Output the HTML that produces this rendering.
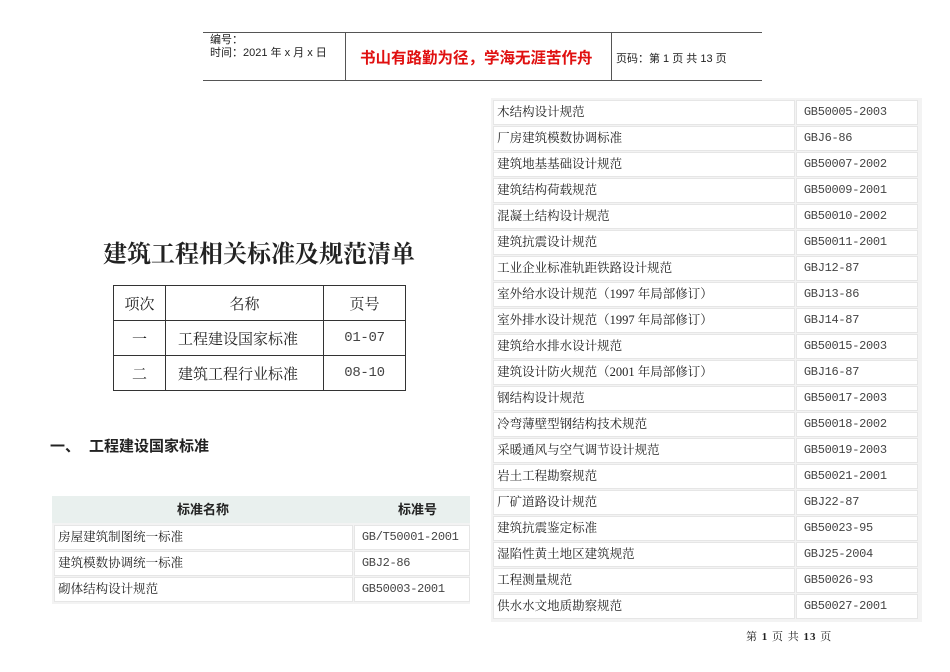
<!DOCTYPE html>
<html><head><meta charset="utf-8"><style>
body{margin:0;width:950px;height:672px;background:#fff;position:relative;overflow:hidden;font-family:"Liberation Serif","Noto Serif CJK SC",serif;color:#222}
.a{position:absolute}
.s{font-family:"Liberation Sans","Noto Sans CJK SC",sans-serif}
.rt{position:absolute;left:491px;top:98px;width:431px;height:524px;background:#f3f3f3}
.r{position:absolute;height:23px;background:#fff;font-size:12.5px;line-height:23px;border:1px solid #e6e6e6}
.m{font-family:"Liberation Mono","Noto Serif CJK SC",monospace;font-size:12px;letter-spacing:-0.3px;color:#444}
.lt{position:absolute;left:52px;top:496px;width:418px;height:108px;background:#f3f3f3}
table.ix{position:absolute;left:113px;top:285px;border-collapse:collapse;font-size:15px}
table.ix td{border:1px solid #333;height:34px;text-align:center;padding:0}
</style></head><body>
<div class="a" style="left:203px;top:32px;width:559px;height:47px;border-top:1px solid #555;border-bottom:1px solid #555"></div>
<div class="a" style="left:345px;top:32px;width:1px;height:48px;background:#555"></div>
<div class="a" style="left:611px;top:32px;width:1px;height:48px;background:#555"></div>
<div class="a s" style="left:210px;top:34px;font-size:11px;line-height:13px">编号：<br>时间：2021 年 x 月 x 日</div>
<div class="a s" style="left:360px;top:46px;font-size:15.5px;color:#e01010;font-weight:bold">书山有路勤为径，学海无涯苦作舟</div>
<div class="a s" style="left:616px;top:50px;font-size:11px">页码：第 1 页 共 13 页</div>

<div class="a" style="left:103px;top:234px;font-size:24px;font-weight:bold;font-family:'Noto Serif CJK SC',serif">建筑工程相关标准及规范清单</div>
<table class="ix">
<tr><td style="width:51px">项次</td><td style="width:157px">名称</td><td style="width:81px">页号</td></tr>
<tr><td>一</td><td style="text-align:left;padding-left:12px">工程建设国家标准</td><td class="m" style="font-size:14px">01-07</td></tr>
<tr><td>二</td><td style="text-align:left;padding-left:12px">建筑工程行业标准</td><td class="m" style="font-size:14px">08-10</td></tr>
</table>
<div class="a s" style="left:50px;top:435px;font-size:15px;font-weight:bold">一、</div>
<div class="a s" style="left:89px;top:435px;font-size:15px;font-weight:bold">工程建设国家标准</div>

<div class="lt">
<div class="a s" style="left:0;top:0;width:418px;height:27px;background:#e9f0ee;font-weight:bold;font-size:13px;line-height:27px"><span class="a" style="left:125px">标准名称</span><span class="a" style="left:346px">标准号</span></div>
<div class="r" style="left:2px;top:29px;width:297px">&nbsp;房屋建筑制图统一标准</div><div class="r m" style="left:302px;top:29px;width:114px">&nbsp;GB/T50001-2001</div>
<div class="r" style="left:2px;top:55px;width:297px">&nbsp;建筑模数协调统一标准</div><div class="r m" style="left:302px;top:55px;width:114px">&nbsp;GBJ2-86</div>
<div class="r" style="left:2px;top:81px;width:297px">&nbsp;砌体结构设计规范</div><div class="r m" style="left:302px;top:81px;width:114px">&nbsp;GB50003-2001</div>
</div>

<div class="rt" id="rt"></div>
<script>
var d=[["木结构设计规范","GB50005-2003"],["厂房建筑模数协调标准","GBJ6-86"],["建筑地基基础设计规范","GB50007-2002"],["建筑结构荷载规范","GB50009-2001"],["混凝土结构设计规范","GB50010-2002"],["建筑抗震设计规范","GB50011-2001"],["工业企业标准轨距铁路设计规范","GBJ12-87"],["室外给水设计规范（1997 年局部修订）","GBJ13-86"],["室外排水设计规范（1997 年局部修订）","GBJ14-87"],["建筑给水排水设计规范","GB50015-2003"],["建筑设计防火规范（2001 年局部修订）","GBJ16-87"],["钢结构设计规范","GB50017-2003"],["冷弯薄壁型钢结构技术规范","GB50018-2002"],["采暖通风与空气调节设计规范","GB50019-2003"],["岩土工程勘察规范","GB50021-2001"],["厂矿道路设计规范","GBJ22-87"],["建筑抗震鉴定标准","GB50023-95"],["湿陷性黄土地区建筑规范","GBJ25-2004"],["工程测量规范","GB50026-93"],["供水水文地质勘察规范","GB50027-2001"]];
var h="";d.forEach(function(r,i){var t=2+i*26;h+='<div class="r" style="left:2px;top:'+t+'px;width:300px">&nbsp;'+r[0]+'</div><div class="r m" style="left:305px;top:'+t+'px;width:120px">&nbsp;'+r[1]+'</div>'});
document.getElementById("rt").innerHTML=h;
</script>
<div class="a" style="left:746px;top:628px;font-size:11px;letter-spacing:1px">第 <b>1</b> 页 共 <b>13</b> 页</div>
</body></html>
